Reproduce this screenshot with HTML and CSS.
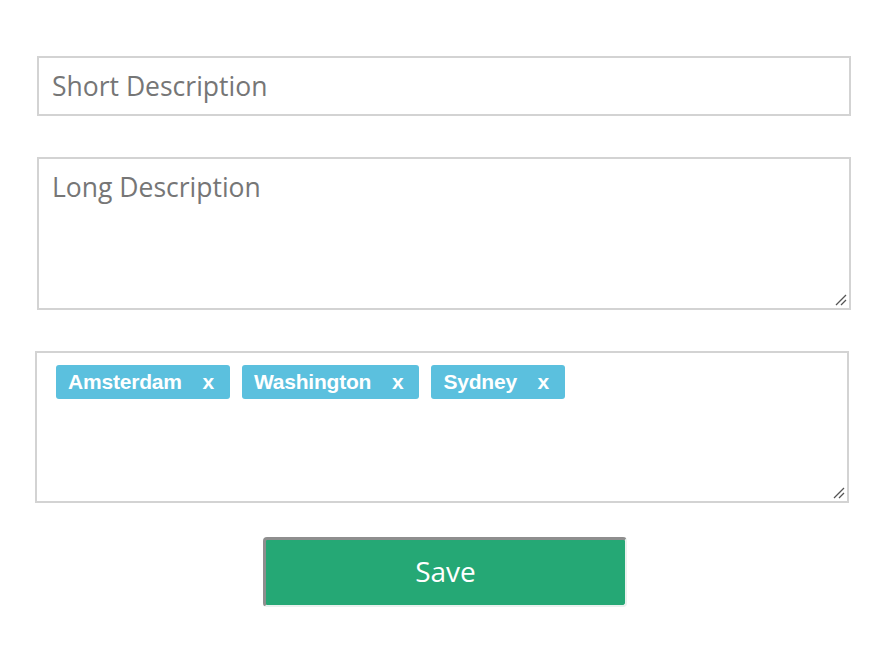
FILE: index.html
```html
<!DOCTYPE html>
<html>
<head>
<meta charset="utf-8">
<link rel="stylesheet" href="styles.css">
</head>
<body>
<form class="form">
  <input class="field short" type="text" placeholder="Short Description">
  <textarea class="field long" placeholder="Long Description"></textarea>
  <div class="tagbox">
    <span class="tag">Amsterdam <span class="rm">x</span></span>
    <span class="tag">Washington <span class="rm">x</span></span>
    <span class="tag">Sydney <span class="rm">x</span></span>
  </div>
  <div class="actions">
    <button type="button" class="save">Save</button>
  </div>
</form>
</body>
</html>
```

FILE: styles.css
```css
html, body {
  margin: 0;
  padding: 0;
  background: #ffffff;
}
.form {
  display: flex;
  flex-direction: column;
  width: 814px;
  padding: 56px 0 0 37px;
}
.field {
  box-sizing: border-box;
  width: 814px;
  border: 2px solid #d3d3d3;
  border-radius: 0;
  background: #fff;
  font-family: "Open Sans", "Lato", sans-serif;
  font-size: 26.5px;
  color: #666;
  padding: 0 14px 0 13px;
  margin: 0;
  outline: none;
}
.field::placeholder {
  color: #767676;
}
.short {
  height: 60px;
}
.long {
  height: 153px;
  margin-top: 41px;
  padding-top: 10px;
  resize: both;
  display: block;
}
.long::-webkit-resizer,
.tagbox::-webkit-resizer {
  background-color: transparent;
  background-image: url("data:image/svg+xml;utf8,<svg xmlns='http://www.w3.org/2000/svg' width='15' height='15'><path d='M3 13 L13 3 M8 13 L13 8' stroke='%23555' stroke-width='1.3' fill='none'/></svg>");
  background-repeat: no-repeat;
  background-position: right 1px bottom 1px;
}
.tagbox {
  box-sizing: border-box;
  width: 814px;
  height: 152px;
  margin-top: 41px;
  margin-left: -2px;
  border: 2px solid #d3d3d3;
  padding: 12px 19px;
  display: flex;
  align-items: flex-start;
  gap: 12px;
  resize: both;
  overflow: auto;
}
.tag {
  display: inline-flex;
  align-items: center;
  height: 34px;
  box-sizing: border-box;
  padding: 0 16px 0 12px;
  background: #5bc0de;
  border-radius: 3px;
  color: #fff;
  font-family: "Liberation Sans", Arial, sans-serif;
  font-weight: bold;
  font-size: 21px;
  letter-spacing: -0.2px;
  white-space: pre;
}
.rm {
  margin-left: 15px;
}
.actions {
  display: flex;
  justify-content: center;
  margin-top: 34px;
  padding-left: 2px;
}
.save {
  box-sizing: border-box;
  width: 364px;
  height: 70px;
  background: #25a875;
  border-style: solid;
  border-width: 3px 2px 2px 3px;
  border-color: #8e8e8e #e9f1ee #e9f1ee #8e8e8e;
  border-radius: 4px;
  color: #fff;
  font-family: "Open Sans", "Lato", sans-serif;
  font-size: 28px;
  padding: 0 0 3px 0;
}
```
